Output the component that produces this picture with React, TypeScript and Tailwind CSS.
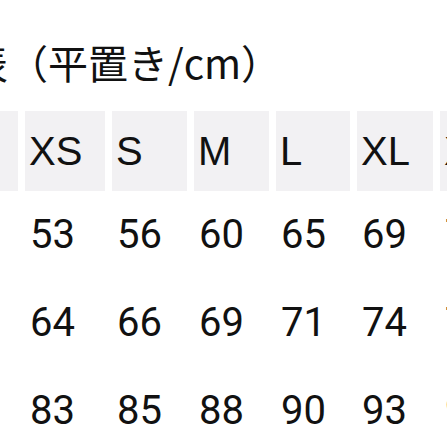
const sizes = ['', 'XS', 'S', 'M', 'L', 'XL', 'XXL'];

const rows = [
  ['', '53', '56', '60', '65', '69', '72'],
  ['', '64', '66', '69', '71', '74', '77'],
  ['', '83', '85', '88', '90', '93', '95'],
];

const gridCols = 'grid grid-cols-[18px_80px_75px_75px_74px_76px_40px] gap-x-[7px]';

export default function App() {
  return (
    <div className="w-[447px] h-[447px] overflow-hidden bg-white text-[#111]">
      {/* title */}
      <div className="h-[111px] pt-[38px]">
        <div
          className="ml-[-32px] whitespace-nowrap text-[40px] leading-[48px]"
          style={{ fontFamily: '"Noto Sans CJK JP", "Liberation Sans", sans-serif' }}
        >
          表（平置き/cm）
        </div>
      </div>

      {/* header row */}
      <div className={gridCols}>
        {sizes.map((s, i) => (
          <div
            key={i}
            className="h-[80px] bg-[#f2f1f3] flex items-center pl-[4px] text-[40px] font-['Liberation_Sans',sans-serif]"
          >
            {s}
          </div>
        ))}
      </div>

      {/* body rows */}
      {rows.map((r, ri) => (
        <div key={ri} className={gridCols}>
          {r.map((v, i) => (
            <div
              key={i}
              className="h-[88px] flex items-center pl-[5px] text-[40px] font-['Roboto',sans-serif]"
            >
              {v}
            </div>
          ))}
        </div>
      ))}
    </div>
  );
}
